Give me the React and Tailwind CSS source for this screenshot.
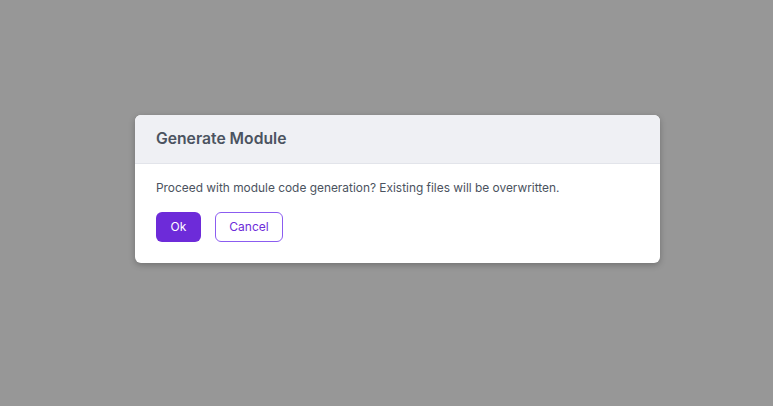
import React from 'react';

// Diálogo de confirmação sobre fundo cinza
export default function App() {
  return (
    <div className="min-h-screen w-full bg-[#979797] flex items-center justify-center" style={{ fontFamily: 'Inter, "Noto Sans", sans-serif' }}>
      <div className="w-[525px] -mt-[28px] ml-[22px] bg-white rounded-md shadow-[0_2px_6px_rgba(0,0,0,0.25)] overflow-hidden">
        {/* Cabeçalho */}
        <div className="h-[49px] bg-[#eff0f4] border-b border-[#e2e4ea] px-[21px] flex items-center">
          <h2 className="text-[15.7px] font-semibold text-[#4b5360]">Generate Module</h2>
        </div>
        {/* Corpo */}
        <div className="px-[21px] pt-[15px] pb-[21px]">
          <p className="text-[11.9px] text-[#4b5360]">Proceed with module code generation? Existing files will be overwritten.</p>
          <div className="mt-[16px] flex gap-[14px]">
            <button className="w-[45px] h-[30px] rounded-md bg-[#6d2bd9] text-white text-[12px]">Ok</button>
            <button className="w-[68px] h-[30px] rounded-md border border-[#8b5cf0] text-[#6d2bd9] text-[12px]">Cancel</button>
          </div>
        </div>
      </div>
    </div>
  );
}
